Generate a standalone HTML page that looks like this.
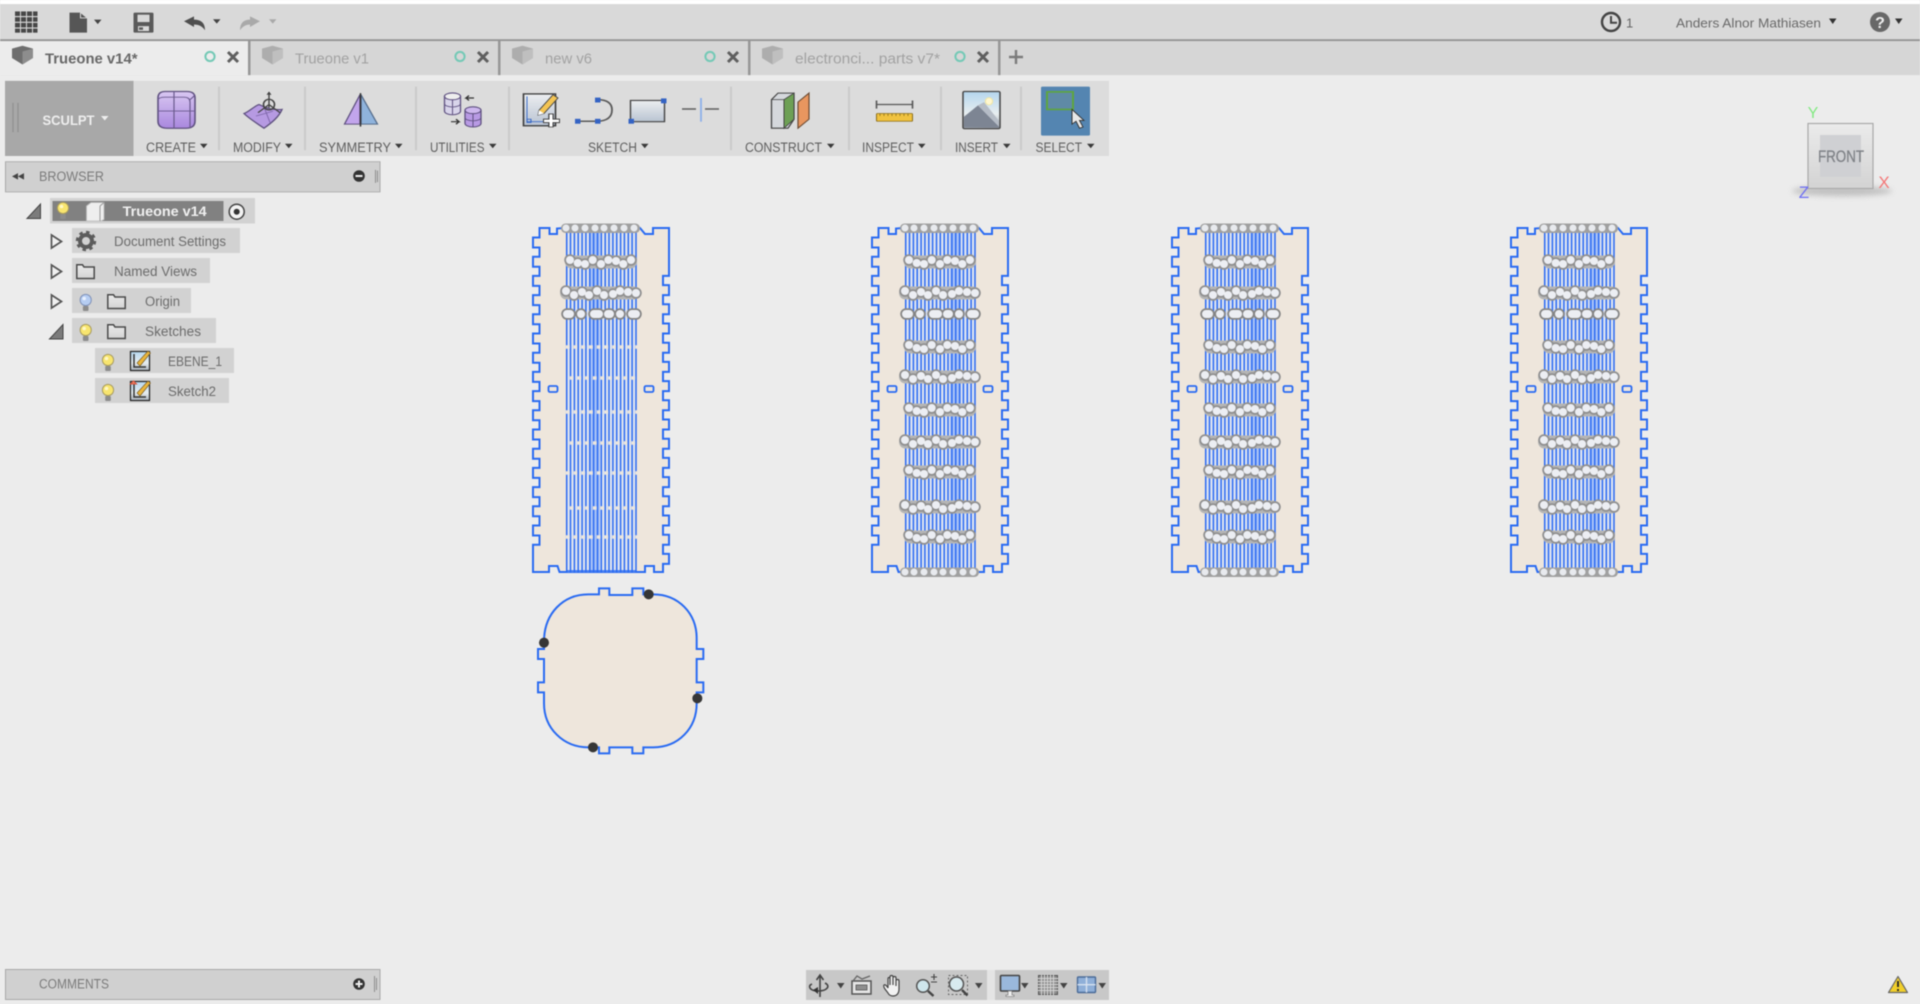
<!DOCTYPE html>
<html><head><meta charset="utf-8"><title>Trueone v14</title>
<style>
html,body{margin:0;padding:0;width:1920px;height:1004px;overflow:hidden;background:#ececec}
svg{display:block;filter:blur(.55px)}
text{font-family:"Liberation Sans",sans-serif}
</style></head><body>
<svg xmlns="http://www.w3.org/2000/svg" width="1920" height="1004" viewBox="0 0 1920 1004">
<defs>
<linearGradient id="gv" x1="0" y1="0" x2="0" y2="1"><stop offset="0" stop-color="#eceef0"/><stop offset="1" stop-color="#b9c3d2"/></linearGradient>
<linearGradient id="gp" x1="0" y1="0" x2="0" y2="1"><stop offset="0" stop-color="#d9c8f2"/><stop offset="1" stop-color="#a987de"/></linearGradient>
<linearGradient id="gc" x1="0" y1="0" x2="0" y2="1"><stop offset="0" stop-color="#ebebeb"/><stop offset="1" stop-color="#d3d3d3"/></linearGradient>
<linearGradient id="gs" x1="0" y1="0" x2="0" y2="1"><stop offset="0" stop-color="#b4d6ee"/><stop offset=".6" stop-color="#e8eef0"/><stop offset="1" stop-color="#aab2bc"/></linearGradient>
<path id="a" d="M0 0h7.5l-3.75 5.5z"/>
<g id="tabi"><path d="M0 3.5 10.5 0 21 3.5V15L10.5 23 0 15z"/><path d="M10.5 7 21 3.5V15L10.5 23z" fill="#fff" fill-opacity=".22"/></g>
<g id="bulb"><circle cx="0" cy="-2" r="5.6" stroke="#a99c5f" stroke-width="1" fill="#f8e56f"/><circle cx="-1.5" cy="-3.5" r="1.8" fill="#fff8c6"/><rect x="-2.8" y="4" width="5.6" height="5" rx="1" fill="#8c8c8c"/></g>
<g id="bulbb"><circle cx="0" cy="-2" r="5.6" stroke="#8092b8" stroke-width="1" fill="#b6cdf2"/><circle cx="-1.5" cy="-3.5" r="1.8" fill="#e8f1ff"/><rect x="-2.8" y="4" width="5.6" height="5" rx="1" fill="#8c8c8c"/></g>
<path id="folder" d="M.8 3V14.5H18.2V3H8L6.5.8H.8z" fill="url(#gc)" stroke="#4a4a4a" stroke-width="1.5"/>
<path id="tri" d="M1 1 11 7.5 1 14z" fill="#f0f0f0" stroke="#555" stroke-width="1.7"/>
<path id="trid" d="M14 .5V15H.5z" fill="#7c7c7c" stroke="#444" stroke-width="1"/>
<g id="outline">
<path d="M6.5 0v9.5h-6.5v10h6.5v9.2h-6.5v10h6.5v9.2h-6.5v10h6.5v9.2h-6.5v10h6.5v9.2h-6.5v10h6.5v9.2h-6.5v10h6.5v9.2h-6.5v10h6.5v9.2h-6.5v10h6.5v9.2h-6.5v10h6.5v9.2h-6.5v10h6.5v9.2h-6.5v10h6.5v9.2h-6.5v10h6.5v9.2h-6.5v10h6.5v9.2h-6.5v10h6.5v9.2h-6.5v10h6.5v9.2h-6.5v10h6.5v9.2h-6.5V344H16V338H24.5L26.5 344H112V338H121V344H130V335.9H136v-10h-6v-9.2h6v-10h-6v-9.2h6v-10h-6v-9.2h6v-10h-6v-9.2h6v-10h-6v-9.2h6v-10h-6v-9.2h6v-10h-6v-9.2h6v-10h-6v-9.2h6v-10h-6v-9.2h6v-10h-6v-9.2h6v-10h-6v-9.2h6v-10h-6v-9.2h6v-10h-6v-9.2h6v-10h-6v-9.2h6v-10h-6v-9.2h6V0H120V6H112L107 0H31L24 .5V6H16.5V0z" fill="#eee6dc" stroke="#2a6bf2" stroke-width="2"/>
<rect x="15.5" y="158" width="9" height="6" rx="1.5" fill="none" stroke="#2a6bf2" stroke-width="1.8"/>
<rect x="111.5" y="158" width="9" height="6" rx="1.5" fill="none" stroke="#2a6bf2" stroke-width="1.8"/>
</g>
<path id="linesA" d="M33.7 0V344M41.4 0V344M49.1 0V344M56.8 0V344M64.5 0V344M72.2 0V344M79.9 0V344M87.6 0V344M95.3 0V344M103 0V344"/>
<path id="linesB" d="M37.5 0V344M45.2 0V344M52.9 0V344M60.6 0V344M68.3 0V344M76 0V344M83.7 0V344M91.4 0V344M99.1 0V344"/>
<g id="W"><rect x="27" y="-6.5" width="80" height="13" rx="6.5" fill="#b5b5b5"/><g stroke-linecap="round" fill="none"><path d="M33 -2h0M41 2h0M49 -1h0M56 2h0M64 -2h0M71 2h0M80 1h0M87 -2h0M95 -1h0M103 0h0" stroke="#8f8f8f" stroke-width="11.5"/><path d="M33 -2h0M41 2h0M49 -1h0M56 2h0M64 -2h0M71 2h0M80 1h0M87 -2h0M95 -1h0M103 0h0" stroke="#eceef3" stroke-width="8"/></g></g>
<g id="N"><rect x="32" y="-6.5" width="72" height="13" rx="6.5" fill="#b5b5b5"/><g stroke-linecap="round" fill="none"><path d="M37 -2h0M44.7 1h0M52 2h0M59.7 -2h0M68 2h0M75.3 -2h0M83 -1h0M90.3 2h0M98 -2h0" stroke="#8f8f8f" stroke-width="11.5"/><path d="M37 -2h0M44.7 1h0M52 2h0M59.7 -2h0M68 2h0M75.3 -2h0M83 -1h0M90.3 2h0M98 -2h0" stroke="#eceef3" stroke-width="8"/></g></g>
<g id="S" stroke-linecap="round" fill="none"><path d="M34 0h3M48 0h0M61 0h5M75 0h2M87 0h0M99 0h4" stroke="#858585" stroke-width="11.5"/><path d="M34 0h3M48 0h0M61 0h5M75 0h2M87 0h0M99 0h4" stroke="#eceef3" stroke-width="8"/></g>
<g id="T"><rect x="28" y="-4.5" width="79" height="9.5" rx="4.5" fill="#a0a0a0"/><g stroke-linecap="round" fill="none"><path d="M33 0h0M42 0h0M52 0h0M62 0h0M71 0h0M81 0h0M91 0h0M101 0h0" stroke="#e8eaee" stroke-width="7"/></g></g>
<g id="full">
<use href="#outline"/>
<rect x="33.7" y="0" width="69.3" height="344" fill="#dde3f1"/>
<rect x="78" y="0" width="11" height="344" fill="#a9c2f6"/>
<g stroke="#2a6af2" stroke-width="1.5" fill="none"><use href="#linesA"/><use href="#linesB"/></g>
<path d="M33.7 343H103" stroke="#2a6bf2" stroke-width="1.6"/>
<use href="#T" y="0"/><use href="#N" y="34"/><use href="#W" y="65"/><use href="#S" y="86"/><use href="#N" y="119"/><use href="#W" y="149"/><use href="#N" y="182"/><use href="#W" y="214"/><use href="#N" y="244"/><use href="#W" y="279"/><use href="#N" y="309"/><use href="#T" y="344"/>
</g>
</defs>

<rect width="1920" height="1004" fill="#ececec"/>

<g transform="scale(1 .81667)">
<rect width="1920" height="5" fill="#fff"/>
<rect y="5" width="1920" height="43" fill="#d9d9d9"/>
<rect y="48" width="1920" height="2.5" fill="#949494"/>
<rect y="50.5" width="1920" height="41.5" fill="#d6d6d6"/>
<rect y="50.5" width="248" height="41.5" fill="#ececec"/>
<g fill="#979797"><rect x="248" y="50" width="2.5" height="42"/><rect x="498" y="50" width="2.5" height="42"/><rect x="748" y="50" width="2.5" height="42"/><rect x="998" y="50" width="2.5" height="42"/></g>

<g fill="#474747"><rect x="15" y="14" width="5" height="5.6"/><rect x="21" y="14" width="5" height="5.6"/><rect x="27" y="14" width="5" height="5.6"/><rect x="33" y="14" width="4.5" height="5.6"/><rect x="15" y="21" width="5" height="5.6"/><rect x="21" y="21" width="5" height="5.6"/><rect x="27" y="21" width="5" height="5.6"/><rect x="33" y="21" width="4.5" height="5.6"/><rect x="15" y="28" width="5" height="5.6"/><rect x="21" y="28" width="5" height="5.6"/><rect x="27" y="28" width="5" height="5.6"/><rect x="33" y="28" width="4.5" height="5.6"/><rect x="15" y="35" width="5" height="5"/><rect x="21" y="35" width="5" height="5"/><rect x="27" y="35" width="5" height="5"/><rect x="33" y="35" width="4.5" height="5"/></g>
<path d="M69.5 15.5H80L87 22.5V40H69.5z" fill="#565656"/><path d="M80.5 15.5V22H87" fill="none" stroke="#d9d9d9" stroke-width="1"/>
<use href="#a" x="94" y="24" fill="#444"/>
<path d="M133.5 17a1.5 1.5 0 0 1 1.5-1.5H152a1.5 1.5 0 0 1 1.5 1.5V38.5a1.5 1.5 0 0 1-1.5 1.5H135a1.5 1.5 0 0 1-1.5-1.5z" fill="#5a5a5a"/><rect x="137.5" y="18" width="12" height="9" fill="#d9d9d9"/><rect x="138" y="32" width="11" height="6" fill="#d9d9d9"/><rect x="139" y="33.5" width="4" height="3" fill="#5a5a5a"/>
<path d="M184 26 194 20V24C201 24 205 28 205 37 202 32 199 30 194 30V33z" fill="#4f4f4f"/>
<use href="#a" x="213" y="23.5" fill="#444"/>
<path d="M260 26 250 20V24C244 24 240 28 240 37 243 32 246 30 250 30V33z" fill="#a9a9a9"/>
<use href="#a" x="269" y="23.5" fill="#a9a9a9"/>

<use href="#tabi" x="12" y="56" fill="#6e6e6e"/>
<use href="#tabi" x="262" y="56" fill="#adadad"/>
<use href="#tabi" x="512" y="56" fill="#adadad"/>
<use href="#tabi" x="762" y="56" fill="#adadad"/>

<rect x="5" y="99" width="1104" height="92" fill="#dcdcdc"/>
<rect x="5" y="99" width="128.5" height="92" fill="#a8a8a8"/>
<path d="M13 126V162M18 126V162" stroke="#939393" stroke-width="1.5"/>
<g fill="#cbcbcb"><rect x="218" y="106" width="2" height="78"/><rect x="304" y="106" width="2" height="78"/><rect x="415" y="106" width="2" height="78"/><rect x="508" y="106" width="2" height="78"/><rect x="730" y="106" width="2" height="78"/><rect x="848" y="106" width="2" height="78"/><rect x="940" y="106" width="2" height="78"/><rect x="1020" y="106" width="2" height="78"/></g>
<g fill="#3a3a3a"><use href="#a" x="200" y="176"/><use href="#a" x="285" y="176"/><use href="#a" x="395" y="176"/><use href="#a" x="489" y="176"/><use href="#a" x="641" y="176"/><use href="#a" x="827" y="176"/><use href="#a" x="918" y="176"/><use href="#a" x="1003" y="176"/><use href="#a" x="1087" y="176"/></g>
<use href="#a" x="101" y="142" fill="#eee"/>

<!-- create -->
<path d="M165 112H187Q195 112 195 120V148Q195 157 186 157H167Q158 157 158 148V120Q158 112 165 112z" fill="url(#gp)" stroke="#5f5180" stroke-width="1.6"/>
<path d="M158 122Q159 119 165 119H184Q190 119 190 125V157M174 112V157M158 136H195M190 122Q194 118 195 116" fill="none" stroke="#6a5a8d" stroke-width="1.2"/>
<!-- modify -->
<path d="M244 139C250 136 254 130 259 128 267 133 275 135 282 134 279 143 272 150 264 157 257 151 250 146 244 139z" fill="#b69ae2" stroke="#5f5180" stroke-width="1.5"/>
<path d="M256 142C262 140 268 138 273 136M264 131 270 150" fill="none" stroke="#7f68ab" stroke-width="1"/>
<path d="M269 113V132M258 138 269 128 280 138" fill="none" stroke="#444" stroke-width="1.4"/><ellipse cx="269" cy="128" rx="5.5" ry="6.5" fill="none" stroke="#444" stroke-width="1.6"/><path d="M269 112l-2.5 4h5z" fill="#444"/>
<!-- symmetry -->
<path d="M360 116 344.5 152H360z" fill="#c2a5ec" stroke="#5f5180" stroke-width="1.3"/>
<path d="M361 116 377.5 152H361z" fill="#8fb3dc" stroke="#566d8c" stroke-width="1.3"/>
<path d="M360.5 114V155" stroke="#333" stroke-width="1.5"/>
<!-- utilities -->
<path d="M444.5 118V136a8 4.5 0 0 0 16 0V118z" fill="#d8d4ea" stroke="#5f5180" stroke-width="1.3"/><ellipse cx="452.5" cy="118" rx="8" ry="4.2" fill="#eee" stroke="#5f5180" stroke-width="1.3"/><path d="M444.5 127a8 4 0 0 0 16 0M452.5 122V140" fill="none" stroke="#5f5180"/>
<path d="M465 136V151a8 4.5 0 0 0 16 0V136z" fill="#b89ae4" stroke="#5f5180" stroke-width="1.3"/><ellipse cx="473" cy="135" rx="8" ry="4.2" fill="#cdb7ee" stroke="#5f5180" stroke-width="1.3"/><path d="M465 144a8 4 0 0 0 16 0M473 139V155" fill="none" stroke="#5f5180"/>
<path d="M474 120H466L469 117M466 120 469 123M451 149H459L456 146M459 149 456 152" fill="none" stroke="#333" stroke-width="1.5"/>
<!-- sketch create -->
<rect x="523.5" y="115" width="32" height="39" fill="url(#gv)" stroke="#3b3b3b" stroke-width="1.6"/>
<path d="M527 118V149H546" fill="none" stroke="#3c6dc8" stroke-width="1"/><rect x="527" y="146" width="4" height="4" fill="none" stroke="#2f62c4"/>
<path d="M539 135 553 116 558 120 544 139 538 141z" fill="#f3c454" stroke="#444" stroke-width="1"/><path d="M539 135 544 139 538 141z" fill="#fff"/>
<path d="M551 139V156M543 148H560" stroke="#444" stroke-width="5.5"/><path d="M551 140V155M544 148H559" stroke="#fff" stroke-width="3"/>
<!-- arc -->
<path d="M577 148.5H597Q612 148 612 134.5 612 122 597 122" fill="none" stroke="#5a5a5a" stroke-width="1.8"/>
<g fill="#3463c4"><rect x="575" y="145.5" width="5.5" height="6"/><rect x="595" y="145.5" width="5.5" height="6"/><rect x="595" y="119.5" width="5.5" height="6"/></g>
<rect x="630.5" y="123" width="34" height="26" fill="url(#gv)" stroke="#444" stroke-width="1.4"/>
<rect x="628.5" y="145.5" width="5.5" height="6" fill="#3463c4"/><rect x="661" y="120.5" width="5.5" height="6" fill="#3463c4"/>
<!-- line -->
<path d="M682 133.5H696M705 133.5H719" stroke="#5e5e5e" stroke-width="1.8"/><path d="M701 120V149" stroke="#8cb0ea" stroke-width="1.8"/>
<!-- construct -->
<path d="M771.5 122 778 114H794V146L788 157H771.5z" fill="#d5d8dc" stroke="#444" stroke-width="1.3"/>
<path d="M784 122 794 114V146L784 157z" fill="#6da055" stroke="#444" stroke-width="1"/><path d="M771.5 122H784V157" fill="none" stroke="#444" stroke-width="1"/>
<path d="M798 125 809 114V146L798 157z" fill="#e8965f" stroke="#6b4a32" stroke-width="1.2"/>
<!-- inspect -->
<path d="M876.5 123V133M912.5 123V133M877 128H912" stroke="#555" stroke-width="1.6" fill="none"/>
<rect x="876.5" y="139" width="36" height="9.5" rx="1" fill="#f0c23f" stroke="#8b6e1a" stroke-width="1"/>
<path d="M880 139v3M884 139v3M888 139v3M892 139v3M896 139v3M900 139v3M904 139v3M908 139v3" stroke="#8b6e1a" stroke-width=".8"/>
<!-- insert -->
<rect x="963" y="112" width="37" height="45.5" rx="1.5" fill="url(#gs)" stroke="#444" stroke-width="1.5"/>
<path d="M964 156V143L978 129 999 155V156.5z" fill="#7d8593"/><path d="M978 129 984 125 999 148V155z" fill="#b5bcc6"/>
<ellipse cx="989" cy="124" rx="3.6" ry="4.4" fill="#fff7cf" stroke="#f1e6a2"/>
<!-- select -->
<rect x="1041" y="106" width="49" height="60" rx="1.5" fill="#5485b1"/>
<rect x="1047" y="112.5" width="26" height="21.5" fill="#5f8aa6" stroke="#5ea63e" stroke-width="2"/>
<path d="M1072 134V152L1076 148.5 1079.5 157 1083 155.5 1079.5 147.5H1084z" fill="#e8e8e8" stroke="#333" stroke-width="1"/>

<!-- browser -->
<rect x="5.5" y="198" width="374.5" height="37" fill="#d0d0d0" stroke="#a8a8a8"/>
<path d="M18 212V220L12 216zM24 212V220L18 216z" fill="#444"/>
<path d="M375.5 208V224M377.5 209V223" stroke="#8e8e8e" stroke-width="1"/>
</g>

<!-- top text and true-proportion icons -->
<circle cx="1611" cy="22" r="9" fill="none" stroke="#444" stroke-width="2.4"/><path d="M1611 16V22.7H1617" fill="none" stroke="#444" stroke-width="2"/>
<text x="1626" y="27.5" font-size="13" fill="#666">1</text>
<text x="1676" y="27.5" font-size="13" fill="#6a6a6a" textLength="145" lengthAdjust="spacingAndGlyphs">Anders Alnor Mathiasen</text>
<use href="#a" x="1829" y="18.5" fill="#333"/>
<circle cx="1880" cy="22" r="10" fill="#686868"/>
<text x="1880" y="28" font-size="16" font-weight="bold" fill="#eee" text-anchor="middle">?</text>
<use href="#a" x="1895" y="18.5" fill="#333"/>

<text x="45" y="63.5" font-size="15" font-weight="bold" fill="#686868" textLength="92.5" lengthAdjust="spacingAndGlyphs">Trueone v14*</text>
<text x="295" y="63.5" font-size="15" fill="#a2a2a2" textLength="74" lengthAdjust="spacingAndGlyphs">Trueone v1</text>
<text x="545" y="63.5" font-size="15" fill="#a2a2a2" textLength="47" lengthAdjust="spacingAndGlyphs">new v6</text>
<text x="795" y="63.5" font-size="15" fill="#a2a2a2" textLength="145" lengthAdjust="spacingAndGlyphs">electronci... parts v7*</text>
<g fill="none" stroke="#74c9b6" stroke-width="2"><circle cx="210" cy="56.5" r="4.6"/><circle cx="460" cy="56.5" r="4.6"/><circle cx="710" cy="56.5" r="4.6"/><circle cx="960" cy="56.5" r="4.6"/></g>
<g fill="none" stroke="#5f5f5f" stroke-width="3"><path d="M228 52 238 62M238 52 228 62M478 52 488 62M488 52 478 62M728 52 738 62M738 52 728 62M978 52 988 62M988 52 978 62"/></g>
<path d="M1016 50V64M1009 57H1023" fill="none" stroke="#7b7b7b" stroke-width="2.4"/>

<text x="42.5" y="125" font-size="14" font-weight="bold" fill="#eee" textLength="52" lengthAdjust="spacingAndGlyphs">SCULPT</text>
<g font-size="13.5" fill="#5f5f5f">
<text x="146" y="152" textLength="50" lengthAdjust="spacingAndGlyphs">CREATE</text>
<text x="233" y="152" textLength="48" lengthAdjust="spacingAndGlyphs">MODIFY</text>
<text x="319" y="152" textLength="72" lengthAdjust="spacingAndGlyphs">SYMMETRY</text>
<text x="430" y="152" textLength="54.5" lengthAdjust="spacingAndGlyphs">UTILITIES</text>
<text x="588" y="152" textLength="49" lengthAdjust="spacingAndGlyphs">SKETCH</text>
<text x="745" y="152" textLength="77" lengthAdjust="spacingAndGlyphs">CONSTRUCT</text>
<text x="862" y="152" textLength="52" lengthAdjust="spacingAndGlyphs">INSPECT</text>
<text x="955" y="152" textLength="43" lengthAdjust="spacingAndGlyphs">INSERT</text>
<text x="1035.5" y="152" textLength="46.5" lengthAdjust="spacingAndGlyphs">SELECT</text>
</g>
<text x="39" y="181" font-size="13.5" fill="#7b7b7b" textLength="65" lengthAdjust="spacingAndGlyphs">BROWSER</text>
<circle cx="359" cy="176" r="5.8" fill="#333"/><rect x="355.5" y="175" width="7" height="2" fill="#eee"/>

<!-- tree -->
<g fill="#d2d2d2"><rect x="50" y="198" width="205" height="25.5"/><rect x="72" y="228" width="168" height="25"/><rect x="72" y="258" width="138" height="25"/><rect x="72" y="288" width="119" height="25"/><rect x="72" y="318" width="144" height="25"/><rect x="95" y="348" width="139" height="25"/><rect x="95" y="378" width="134" height="25"/></g>
<rect x="52.5" y="201" width="171" height="20" fill="#818181"/>
<use href="#trid" x="26.5" y="203.5"/>
<use href="#bulb" x="63" y="210"/>
<path d="M86.5 206 91 202.5H104V219.5L101 221H86.5z" fill="#eeeeee" stroke="#bbb" stroke-width=".8"/><path d="M100 206V221M100 206 104 202.5" stroke="#999" fill="none"/>
<text x="122.7" y="216" font-size="14" font-weight="bold" fill="#f0f0f0" textLength="84" lengthAdjust="spacingAndGlyphs">Trueone v14</text>
<circle cx="236.7" cy="211.7" r="7.5" fill="#f3f3f3" stroke="#444" stroke-width="1.5"/><circle cx="236.7" cy="211.7" r="3" fill="#333"/>

<use href="#tri" x="50.5" y="234"/>
<circle cx="86" cy="241" r="6" fill="none" stroke="#5c5c5c" stroke-width="4"/><circle cx="86" cy="241" r="8.7" fill="none" stroke="#5c5c5c" stroke-width="3" stroke-dasharray="3.4 3.4"/>
<text x="114" y="246" font-size="13.5" fill="#6c6c6c" textLength="112" lengthAdjust="spacingAndGlyphs">Document Settings</text>

<use href="#tri" x="50.5" y="264"/>
<use href="#folder" x="76" y="264"/>
<text x="114" y="276" font-size="13.5" fill="#6c6c6c" textLength="83" lengthAdjust="spacingAndGlyphs">Named Views</text>

<use href="#tri" x="50.5" y="294"/>
<use href="#bulbb" x="85.7" y="302"/>
<use href="#folder" x="107" y="294"/>
<text x="145" y="306" font-size="13.5" fill="#6c6c6c" textLength="35" lengthAdjust="spacingAndGlyphs">Origin</text>

<use href="#trid" x="49" y="324"/>
<use href="#bulb" x="85.7" y="332"/>
<use href="#folder" x="107" y="324"/>
<text x="145" y="336" font-size="13.5" fill="#6c6c6c" textLength="56" lengthAdjust="spacingAndGlyphs">Sketches</text>

<use href="#bulb" x="108" y="362"/>
<rect x="130.5" y="351.5" width="19" height="19" fill="url(#gs)" stroke="#222" stroke-width="1.2"/>
<path d="M134 354V367H146" fill="none" stroke="#333" stroke-width="1.5"/><path d="M137 363 148 351 150.5 353 140 366z" fill="#eab53b" stroke="#6c5522" stroke-width=".6"/>
<text x="168" y="366" font-size="13.5" fill="#6c6c6c" textLength="54" lengthAdjust="spacingAndGlyphs">EBENE_1</text>

<use href="#bulb" x="108" y="392"/>
<rect x="130.5" y="381.5" width="19" height="19" fill="url(#gs)" stroke="#222" stroke-width="1.2"/>
<path d="M134 384V397H146" fill="none" stroke="#333" stroke-width="1.5"/><path d="M137 393 148 381 150.5 383 140 396z" fill="#eab53b" stroke="#6c5522" stroke-width=".6"/>
<path d="M130 384H137M133.5 381 130.5 384H136.5z" fill="#ef8a6e" stroke="#d8553d" stroke-width="1"/>
<text x="168" y="396" font-size="13.5" fill="#6c6c6c" textLength="48" lengthAdjust="spacingAndGlyphs">Sketch2</text>

<!-- sketch panels -->
<g transform="translate(533 228)">
<use href="#outline"/>
<rect x="33.7" y="0" width="69.3" height="344" fill="#dfe4ef"/>
<rect x="56" y="0" width="11" height="344" fill="#a9c2f6"/>
<g stroke="#2a6af2" stroke-width="1.5" fill="none">
<use href="#linesA"/>
<use href="#linesB"/>
</g>
<g stroke="#ece6dd" stroke-width="3.6" fill="none" stroke-dasharray="3.8 3.9">
<path d="M33 119H104M33 184H104M33 245H104M33 309H104"/>
<path d="M36.8 150H104M36.8 215H104M36.8 280H104"/>
</g>
<path d="M33.7 343H103" stroke="#2a6bf2" stroke-width="1.6"/>
<use href="#T" y="0"/><use href="#N" y="34"/><use href="#W" y="65"/><use href="#S" y="86"/>
</g>
<use href="#full" x="872" y="228"/>
<use href="#full" x="1172" y="228"/>
<use href="#full" x="1511" y="228"/>

<!-- rounded profile -->
<g transform="translate(520 570) scale(.33333)">
<path d="M72 215C72 130 130 73 205 73H237V55H268V75H337V55H370V73H400C475 73 530 130 530 205V237H550V267H530V337H550V367H530V400C530 475 475 532 400 532H370V550H337V532H268V550H237V532H205C130 532 72 475 72 400V367H54V337H72V267H54V237H72z" fill="#eee6dc" stroke="#2a6bf2" stroke-width="6"/>
<g fill="#363636"><circle cx="386" cy="73" r="15"/><circle cx="72" cy="218" r="15"/><circle cx="532" cy="385" r="15"/><circle cx="219" cy="532" r="15"/></g>
</g>

<!-- view cube -->
<ellipse cx="1842" cy="191" rx="50" ry="5" fill="#b8b8b8" opacity=".85" style="filter:blur(3px)"/>
<rect x="1808" y="123.5" width="65" height="65" fill="url(#gc)" stroke="#a9a9a9" stroke-width="1.2"/>
<rect x="1820" y="135" width="41" height="42" fill="#cfd0d3"/>
<text x="1818" y="162" font-size="17" fill="#7f8287" stroke="#7f8287" stroke-width=".3" textLength="46" lengthAdjust="spacingAndGlyphs">FRONT</text>
<text x="1813" y="118" font-size="16" fill="#82ea82" text-anchor="middle">Y</text>
<text x="1884" y="188" font-size="17" fill="#f37878" text-anchor="middle">X</text>
<text x="1804" y="198" font-size="17" fill="#6f70f2" text-anchor="middle">Z</text>

<!-- comments -->
<rect x="5.5" y="969.5" width="374.5" height="30" fill="#d0d0d0" stroke="#a8a8a8"/>
<text x="39" y="988.5" font-size="13.5" fill="#7b7b7b" textLength="70" lengthAdjust="spacingAndGlyphs">COMMENTS</text>
<circle cx="359" cy="984" r="5.8" fill="#333"/><path d="M359 980.5V987.5M355.5 984H362.5" stroke="#eee" stroke-width="2"/>
<path d="M374.5 976V992M376.5 978V990" stroke="#8e8e8e" stroke-width="1"/>

<!-- bottom toolbar -->
<rect x="806" y="970" width="181" height="30" fill="#c8c8c8"/>
<rect x="995" y="970" width="114" height="30" fill="#c8c8c8"/>
<rect x="987" y="970" width="8" height="30" fill="#e4e4e4"/>
<path d="M820 976V997M816.5 980 820 975 823.5 980" fill="none" stroke="#444" stroke-width="1.6"/>
<path d="M812 984C807 986 810 991 818 991 827 991 831 986 825 983" fill="none" stroke="#444" stroke-width="1.6"/><path d="M813 990 818 987V994z" fill="#333"/>
<use href="#a" x="837" y="983" fill="#444"/>
<rect x="852" y="981" width="19" height="13" fill="#e6e6e6" stroke="#555" stroke-width="1.5"/><rect x="856" y="985" width="11" height="5" fill="#8f8f8f" stroke="#555" stroke-width=".8"/><path d="M853 981 857 976 862 979 870 976" fill="none" stroke="#666" stroke-width="1.3"/>
<path d="M888 993C885 989 883 987 884 985 885 984 887 986 888 988V979C888 977 890 977 890 979V985 977C890 975 893 975 893 977V985 978C893 976 896 976 896 978V986 981C896 979 899 979 899 981V989C899 993 897 996 893 996 891 996 889 995 888 993z" fill="#f2f2f2" stroke="#444" stroke-width="1.2"/>
<circle cx="923" cy="986" r="6.3" fill="#cfe6ec" stroke="#555" stroke-width="1.5"/><path d="M928 991 933.5 996" stroke="#444" stroke-width="2.4"/><path d="M931 977H937M934 974V980M931 982H937" stroke="#444" stroke-width="1.1" fill="none"/>
<rect x="948.5" y="975.5" width="19" height="19" fill="none" stroke="#666" stroke-width="1" stroke-dasharray="2 2"/>
<circle cx="956.5" cy="984" r="7" fill="#d8eaef" stroke="#555" stroke-width="1.5"/><path d="M962 990 967.5 995.5" stroke="#444" stroke-width="2.4"/>
<use href="#a" x="975" y="983" fill="#444"/>
<rect x="1000.5" y="975.5" width="19" height="15.5" rx="1" fill="#9ab8dc" stroke="#444" stroke-width="1.6"/><path d="M1008 991V995H1006V996.5H1014V995H1012V991z" fill="#f0f0f0" stroke="#666" stroke-width=".6"/>
<use href="#a" x="1021" y="983" fill="#444"/>
<rect x="1038.5" y="975.5" width="19" height="19" fill="#8e8e8e" stroke="#555"/>
<path d="M1041.5 975V995M1044.5 975V995M1047.5 975V995M1050.5 975V995M1053.5 975V995M1038 978.5H1058M1038 981.5H1058M1038 984.5H1058M1038 987.5H1058M1038 990.5H1058" stroke="#d4d4d4" stroke-width="1"/>
<use href="#a" x="1060" y="983" fill="#444"/>
<rect x="1077.5" y="977" width="18" height="15.5" rx="1" fill="#8fafd8" stroke="#4a6b98" stroke-width="1.4"/><path d="M1086.5 977V992.5M1077.5 984.7H1095.5" stroke="#d8e2f0" stroke-width="1.4"/>
<use href="#a" x="1098.5" y="983" fill="#444"/>

<!-- warning -->
<path d="M1898 976.5 1907.5 992.5H1888.5z" fill="#f1cf2b" stroke="#666" stroke-width="1.2" stroke-linejoin="round"/>
<path d="M1898 981V987M1898 989V991" stroke="#222" stroke-width="1.8"/>
</svg>
</body></html>
